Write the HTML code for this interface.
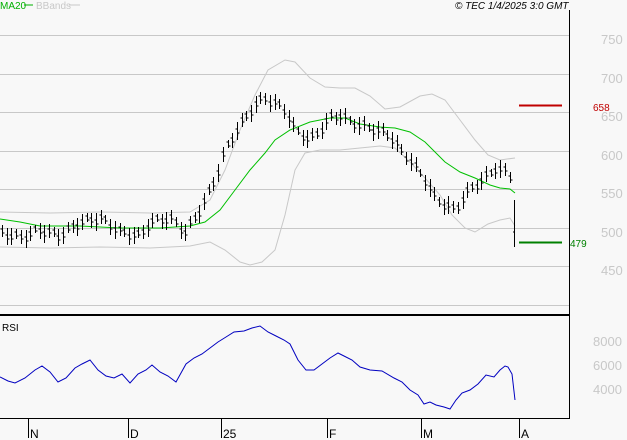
<!DOCTYPE html><html><head><style>
body{margin:0;background:#f8f8f8;font-family:"Liberation Sans",sans-serif;}
svg{display:block}
</style></head><body>
<svg id="s" width="627" height="440" xmlns="http://www.w3.org/2000/svg" font-family="Liberation Sans, sans-serif">
<rect width="627" height="440" fill="#f8f8f8"/>
<g stroke="#c8c8c8" stroke-width="1">
<line x1="0" y1="35.5" x2="569" y2="35.5"/><line x1="0" y1="74.5" x2="569" y2="74.5"/>
<line x1="0" y1="112.5" x2="569" y2="112.5"/><line x1="0" y1="151.5" x2="569" y2="151.5"/>
<line x1="0" y1="189.5" x2="569" y2="189.5"/><line x1="0" y1="228.5" x2="569" y2="228.5"/>
<line x1="0" y1="266.5" x2="569" y2="266.5"/><line x1="0" y1="305.5" x2="569" y2="305.5"/>
</g>
<g fill="#c8c8c8" font-size="13">
<text x="601" y="44">750</text><text x="601" y="83">700</text><text x="601" y="121">650</text>
<text x="601" y="160">600</text><text x="601" y="198">550</text><text x="601" y="237">500</text><text x="601" y="275">450</text>
<text x="593" y="346">8000</text><text x="593" y="370">6000</text><text x="593" y="394">4000</text>
</g>
<line x1="569.5" y1="10" x2="569.5" y2="418" stroke="#000"/>
<line x1="0" y1="315" x2="570" y2="315" stroke="#000" stroke-width="2"/>
<line x1="0" y1="418.5" x2="570" y2="418.5" stroke="#000"/>
<g stroke="#000"><line x1="28.5" y1="418" x2="28.5" y2="438"/><line x1="128.5" y1="418" x2="128.5" y2="438"/><line x1="221.5" y1="418" x2="221.5" y2="438"/><line x1="327.5" y1="418" x2="327.5" y2="438"/><line x1="421.5" y1="418" x2="421.5" y2="438"/><line x1="519.5" y1="418" x2="519.5" y2="438"/></g>
<g font-size="12" fill="#000"><text x="30" y="438">N</text><text x="130" y="438">D</text><text x="223" y="438">25</text><text x="329" y="438">F</text><text x="423" y="438">M</text><text x="521" y="438">A</text></g>
<text x="0" y="9" font-size="10" fill="#00b000">MA20</text><line x1="24" y1="5" x2="33" y2="5" stroke="#00b000"/>
<text x="36" y="9" font-size="10" fill="#c8c8c8">BBands</text><line x1="69" y1="5" x2="80" y2="5" stroke="#c8c8c8"/>
<text x="455" y="9" font-size="10" font-style="italic" fill="#000">© TEC 1/4/2025 3:0 GMT</text>
<text x="2" y="331" font-size="10" fill="#000">RSI</text>
<line x1="519" y1="105.5" x2="562" y2="105.5" stroke="#c00000" stroke-width="2"/>
<text x="593" y="111" font-size="10" fill="#c00000">658</text>
<line x1="519" y1="242.5" x2="562" y2="242.5" stroke="#008000" stroke-width="2"/>
<text x="570" y="247" font-size="10" fill="#008000">479</text>
<polyline fill="none" stroke="#c8c8c8" points="0,212 50,213 100,212 150,213 190,212 210,200 225,170 240,130 255,95 268,70 285,60 295,62 310,78 325,87 340,88 355,88 370,96 385,109 400,107 420,96 432,94 445,100 460,120 475,140 488,155 500,160 515,158"/>
<polyline fill="none" stroke="#c8c8c8" points="0,247 50,248 100,247 150,248 190,246 210,242 225,250 240,262 250,265 262,262 275,250 285,215 295,170 305,153 320,150 340,150 360,148 380,146 395,148 410,162 425,178 440,195 452,215 465,228 475,232 488,224 500,220 510,218 515,226"/>
<polyline fill="none" stroke="#00c000" points="0,219 20,222 40,226 80,226 120,228 160,228 190,226 205,222 220,210 235,190 250,170 265,153 275,140 290,130 310,122 330,118 345,118 360,124 380,127 395,128 410,132 425,142 435,152 445,162 460,172 475,178 490,185 500,188 510,189 515,193"/>
<polyline fill="none" stroke="#0000c0" points="0,377 8,381 15,383 25,378 35,370 42,366 50,372 58,382 66,378 75,368 82,364 90,360 98,370 106,376 114,378 122,374 130,383 138,374 146,370 152,365 160,372 168,376 176,382 186,364 194,358 202,354 210,348 218,342 226,337 234,332 244,331 252,328 260,326 268,332 276,336 284,340 290,344 298,360 306,370 314,370 322,364 330,358 338,353 344,356 352,360 360,367 370,370 382,371 394,378 402,382 410,390 418,395 424,404 430,402 436,405 444,407 450,409 456,400 462,393 470,390 478,384 486,375 494,377 500,370 505,366 508,367 512,374 515,400"/>
<path id="bars" stroke="#000" fill="none" d=""/>
</svg>
<script>
var k=[[0,232],[20,238],[40,230],[60,236],[80,222],[100,218],[120,232],[140,236],[150,222],[170,218],[185,232],[200,210],[215,180],[225,150],[240,125],[255,105],[265,98],[275,104],[285,110],[295,130],[310,140],[320,130],[330,118],[340,115],[350,122],[360,125],[375,130],[390,135],[400,150],[410,160],[425,180],[435,198],[445,205],[455,210],[465,195],[475,185],[485,178],[495,168],[505,172],[510,176]];
function f(x){for(var i=1;i<k.length;i++)if(x<=k[i][0]){var a=k[i-1],b=k[i];return a[1]+(b[1]-a[1])*(x-a[0])/(b[0]-a[0]);}return 176;}
var d="",s=7;
for(var x=2;x<=510;x+=4.7){var xx=Math.round(x)+0.5,y=f(x)+Math.sin(s++*1.7)*3,h=4+Math.abs(Math.sin(s*2.3))*5;
d+="M"+xx+" "+(y-h).toFixed(0)+"V"+(y+h).toFixed(0)+"M"+(xx-2)+" "+(y-2).toFixed(0)+"h2M"+xx+" "+(y+2).toFixed(0)+"h2";}
d+="M514.5 200V247M513 232h1M514.5 266";
document.getElementById("bars").setAttribute("d",d);
</script>
</body></html>
